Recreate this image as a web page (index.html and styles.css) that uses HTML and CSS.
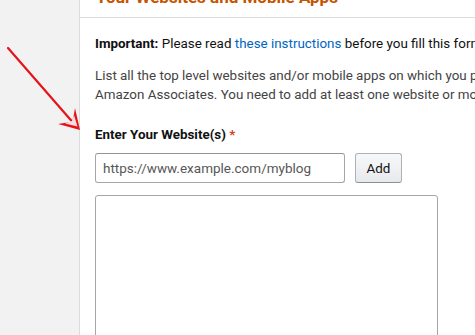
FILE: index.html
```html
<!DOCTYPE html>
<html>
<head>
<meta charset="utf-8">
<link rel="stylesheet" href="styles.css">
</head>
<body>
<div class="page">
  <div class="side"></div>
  <div class="card">
    <div class="card-head">Your Websites and Mobile Apps</div>
    <div class="card-body">
      <p class="important"><b>Important:</b> Please read <a href="#">these instructions</a> before you fill this form completely.</p>
      <p class="desc">List all the top level websites and/or mobile apps on which you plan to display ads from Amazon Associates. You need to add at least one website or mobile app.</p>
      <div class="label">Enter Your Website(s) <span class="req">*</span></div>
      <div class="row">
        <input class="url" type="text" placeholder="https://www.example.com/myblog">
        <button class="add">Add</button>
      </div>
      <div class="list"></div>
    </div>
  </div>
</div>
<svg class="arrow" width="100" height="140" viewBox="0 0 100 140">
  <line x1="8" y1="48" x2="76" y2="126" stroke="#e5141b" stroke-width="2.2" stroke-linecap="round"/>
  <path d="M80 130 L58 124 L64 123 L72 122 L74 114 L75 108 Z" fill="#e5141b"/>
  <path d="M77.5 126.5 L65 123.5 L72 121 L74 115 Z" fill="#fff" opacity="0.85"/>
</svg>
</body>
</html>
```
FILE: styles.css
```css
html, body {
  margin: 0;
  padding: 0;
  height: 100%;
  overflow: hidden;
}
body {
  background: #f2f2f2;
  font-family: Roboto, "Noto Sans", sans-serif;
  font-size: 13.4px;
  color: #111;
}
.page {
  display: flex;
  height: 100%;
}
.side {
  width: 79px;
  flex: none;
}
.card {
  flex: 1;
  background: #fff;
  border-left: 1px solid #dcdcdc;
  min-width: 500px;
}
.card-head {
  margin-top: -13px;
  padding: 0 16px 10px 16px;
  line-height: 20px;
  font-size: 17px;
  font-weight: bold;
  color: #c45500;
  border-bottom: 1px solid #dcdcdc;
  white-space: nowrap;
}
.card-body {
  padding: 16px 15px;
}
p {
  margin: 0;
  line-height: 19px;
  white-space: nowrap;
}
.important {
  color: #111;
}
.important b {
  font-weight: bold;
}
.important a {
  color: #0066c0;
  text-decoration: none;
}
.desc {
  margin-top: 13px;
  color: #444;
  white-space: normal;
  width: 525px;
}
.label {
  margin-top: 21px;
  line-height: 19px;
  font-weight: bold;
  color: #111;
}
.req {
  color: #d0421b;
}
.row {
  margin-top: 9px;
  display: flex;
  gap: 10px;
}
.url {
  box-sizing: border-box;
  width: 250px;
  height: 30px;
  border: 1px solid #a6a6a6;
  border-top-color: #949494;
  border-radius: 3px;
  padding: 0 7px;
  font-family: inherit;
  font-size: 13.5px;
  color: #111;
  outline: none;
}
.url::placeholder {
  color: #575757;
}
.add {
  box-sizing: border-box;
  width: 47px;
  height: 30px;
  border: 1px solid #adb1b8;
  border-bottom-color: #8d9096;
  border-radius: 3px;
  background: linear-gradient(#f7f8fa, #e7e9ec);
  font-family: inherit;
  font-size: 13.4px;
  color: #111;
  padding: 0;
}
.list {
  margin-top: 12px;
  box-sizing: border-box;
  width: 343px;
  height: 200px;
  border: 1px solid #a6a6a6;
  border-radius: 3px;
}
.arrow {
  position: absolute;
  left: 0;
  top: 0;
}
```
